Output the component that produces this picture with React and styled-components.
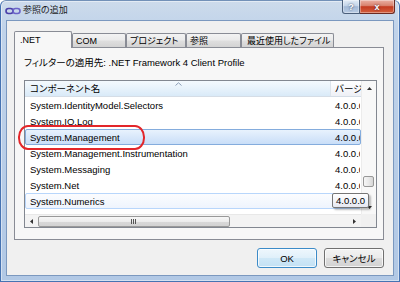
import React from "react";
import styled, { createGlobalStyle } from "styled-components";

const GlobalStyle = createGlobalStyle`
  html, body { margin: 0; padding: 0; }
  body {
    width: 400px; height: 282px; overflow: hidden;
    font-family: "Liberation Sans", "Noto Sans CJK JP", sans-serif;
    font-size: 9.5px;
    font-feature-settings: "palt" 1;
    color: #000;
    background: #fff;
  }
  * { box-sizing: border-box; }
`;

const Window = styled.div`
  width: 400px;
  height: 282px;
  display: flex;
  flex-direction: column;
  border: 1px solid #4673b2;
  border-top-color: #7391b8;
  border-radius: 6px 6px 0 0;
  background: linear-gradient(180deg, #cddbeb 0%, #c0d3ea 10%, #b1c8e5 100%);
  box-shadow: inset 0 0 0 1px rgba(255, 255, 255, 0.45);
`;

const TitleBar = styled.div`
  height: 19px;
  display: flex;
  align-items: center;
  padding-left: 4px;
  gap: 2px;
`;

const Title = styled.span`
  font-size: 9px;
  color: #1b1b1b;
  flex: 1;
  line-height: 12px;
  margin-top: -1px;
`;

const CaptionButtons = styled.div`
  align-self: flex-start;
  display: flex;
  margin-top: -1px;
  margin-right: 4px;
`;

const CaptionButton = styled.div`
  height: 14px;
  width: ${(p) => p.$w}px;
  display: flex;
  align-items: center;
  justify-content: center;
  color: #fff;
  font-weight: bold;
  font-size: 9px;
  text-shadow: 0 0 2px rgba(20, 30, 60, 0.9);
  border: 1px solid ${(p) => (p.$close ? "#6b2a22" : "#4b5f7b")};
  border-top: none;
  border-left: ${(p) => (p.$close ? "none" : "1px solid #4b5f7b")};
  border-radius: ${(p) => (p.$close ? "0 0 3px 0" : "0 0 0 3px")};
  background: ${(p) =>
    p.$close
      ? "linear-gradient(180deg, #eab0a3 0%, #d98470 42%, #c43b20 52%, #d4603f 100%)"
      : "linear-gradient(180deg, #e2ebf5 0%, #c6d6ea 42%, #a3b9d6 52%, #b9cce4 100%)"};
  box-shadow: inset 0 0 0 1px rgba(255, 255, 255, 0.35);
`;

const Client = styled.div`
  flex: 1;
  min-height: 0;
  margin: 0 5px 5px 5px;
  border: 1px solid #7b98bf;
  background: #f0f0f0;
  display: flex;
  flex-direction: column;
  padding: 10px 9px 7px 7px;
`;

const TabControl = styled.div`
  flex: 1;
  min-height: 0;
  display: flex;
  flex-direction: column;
`;

const TabStrip = styled.div`
  height: 16px;
  display: flex;
  align-items: flex-end;
  position: relative;
  z-index: 1;
`;

const Tab = styled.div`
  width: ${(p) => p.$w}px;
  height: ${(p) => (p.$active ? 17 : 14)}px;
  margin-bottom: ${(p) => (p.$active ? -1 : 0)}px;
  padding-left: ${(p) => p.$pad}px;
  display: flex;
  align-items: center;
  white-space: nowrap;
  overflow: hidden;
  font-size: 9px;
  border: 1px solid #898c95;
  border-bottom: none;
  border-radius: 2px 2px 0 0;
  background: ${(p) =>
    p.$active
      ? "#f7f7f7"
      : "linear-gradient(180deg, #f3f3f3 0%, #ebebeb 45%, #dedede 55%, #d3d3d3 100%)"};
  color: #000;
`;

const Panel = styled.div`
  flex: 1;
  min-height: 0;
  border: 1px solid #898c95;
  background: #f7f7f7;
  display: flex;
  flex-direction: column;
  padding: 9px 6px 11px 9px;
`;

const FilterLine = styled.div`
  height: 12px;
  line-height: 12px;
  margin-bottom: 11px;
  white-space: nowrap;
`;

const List = styled.div`
  flex: 1;
  min-height: 0;
  position: relative;
  border: 1px solid #828790;
  background: #fff;
  display: grid;
  grid-template-columns: 1fr 15px;
  grid-template-rows: 1fr 13px;
`;

const Content = styled.div`
  grid-area: 1 / 1;
  overflow: hidden;
  display: flex;
  flex-direction: column;
`;

const Header = styled.div`
  height: 16px;
  flex-shrink: 0;
  display: flex;
  border-bottom: 1px solid #d5dde6;
`;

const HeaderCell = styled.div`
  position: relative;
  width: ${(p) => p.$w}px;
  flex-shrink: 0;
  padding-left: ${(p) => p.$pad}px;
  line-height: 15px;
  white-space: nowrap;
  overflow: hidden;
  border-right: ${(p) => (p.$divider ? "1px solid #dde4ec" : "none")};
  background: ${(p) =>
    p.$sorted
      ? "linear-gradient(180deg, #f4f9fd 0%, #e9f3fb 45%, #d9eaf8 100%)"
      : "linear-gradient(180deg, #ffffff 0%, #f7f8fb 50%, #eef0f6 100%)"};
`;

const SortArrow = styled.svg`
  position: absolute;
  top: 1px;
  left: 150px;
`;

const Row = styled.div`
  height: 16px;
  flex-shrink: 0;
  display: flex;
  align-items: center;
  border: 1px solid
    ${(p) => (p.$selected ? "#84acdd" : p.$hover ? "#b8d6fb" : "transparent")};
  border-radius: 2px;
  background: ${(p) =>
    p.$selected
      ? "linear-gradient(180deg, #e8f2fd 0%, #c9def8 100%)"
      : p.$hover
      ? "linear-gradient(180deg, #fbfcfe 0%, #eef4fd 100%)"
      : "transparent"};
`;

const Cell = styled.div`
  width: ${(p) => p.$w}px;
  flex-shrink: 0;
  padding-left: 4px;
  white-space: nowrap;
  overflow: hidden;
  line-height: 13px;
`;

const VScroll = styled.div`
  grid-area: 1 / 2;
  display: flex;
  flex-direction: column;
  align-items: center;
  background: #f8f8f8;
  border-left: 1px solid #ececec;
`;

const ArrowBox = styled.div`
  width: ${(p) => p.$w || 14}px;
  height: ${(p) => p.$h || 14}px;
  flex-shrink: 0;
  display: flex;
  align-items: center;
  justify-content: center;
`;

const VThumb = styled.div`
  width: 11px;
  height: 11px;
  margin-top: 81px;
  margin-right: 2px;
  border: 1px solid #979797;
  border-radius: 2px;
  background: linear-gradient(90deg, #f6f6f6 0%, #e9e9e9 50%, #d6d6d6 100%);
`;

const HScroll = styled.div`
  grid-area: 2 / 1;
  display: flex;
  align-items: center;
  background: #f3f3f3;
  border-top: 1px solid #e8e8e8;
`;

const HThumb = styled.div`
  width: 192px;
  height: 11px;
  display: flex;
  align-items: center;
  justify-content: center;
  border: 1px solid #999;
  border-radius: 2px;
  background: linear-gradient(180deg, #f7f7f7 0%, #ececec 50%, #d9d9d9 51%, #d2d2d2 100%);
`;

const Spacer = styled.div`
  flex: 1;
`;

const Corner = styled.div`
  grid-area: 2 / 2;
  background: #f0f0f0;
`;

const Tooltip = styled.div`
  position: absolute;
  left: 307px;
  top: 112px;
  width: 37px;
  height: 15px;
  padding-left: 3px;
  line-height: 13px;
  border: 1px solid #767676;
  border-radius: 2px;
  background: linear-gradient(180deg, #ffffff 0%, #e6e8f1 100%);
  box-shadow: 2px 2px 2px rgba(0, 0, 0, 0.25);
  z-index: 3;
  white-space: nowrap;
`;

const Highlight = styled.div`
  position: absolute;
  left: -7px;
  top: 44px;
  width: 127px;
  height: 25px;
  border: 2px solid #e3262a;
  border-radius: 10px / 12px;
  z-index: 4;
  pointer-events: none;
`;

const ButtonRow = styled.div`
  margin-top: 8px;
  display: flex;
  justify-content: flex-end;
  gap: 7px;
`;

const Button = styled.div`
  width: 60px;
  height: 20px;
  display: flex;
  align-items: center;
  justify-content: center;
  border-radius: 3px;
  border: 1px solid ${(p) => (p.$default ? "#3c8bc8" : "#707070")};
  background: ${(p) =>
    p.$default
      ? "linear-gradient(180deg, #eef7fd 0%, #e0f0fa 48%, #cfe8f7 52%, #c3e1f4 100%)"
      : "linear-gradient(180deg, #f3f3f3 0%, #ebebeb 48%, #dddddd 52%, #d2d2d2 100%)"};
  box-shadow: inset 0 0 0 1px rgba(255, 255, 255, 0.75);
`;

const AppIcon = () => (
  <svg width="16" height="8" viewBox="0 0 16 8">
    <rect x="1" y="1.5" width="7" height="5" rx="2.5" fill="none" stroke="#4a3fa8" strokeWidth="1.6" />
    <rect x="8" y="1.5" width="7" height="5" rx="2.5" fill="none" stroke="#6a63c8" strokeWidth="1.6" />
  </svg>
);

const rows = [
  "System.IdentityModel.Selectors",
  "System.IO.Log",
  "System.Management",
  "System.Management.Instrumentation",
  "System.Messaging",
  "System.Net",
  "System.Numerics",
  "System.Printing",
];

export default function App() {
  return (
    <>
      <GlobalStyle />
      <Window>
        <TitleBar>
          <AppIcon />
          <Title>参照の追加</Title>
          <CaptionButtons>
            <CaptionButton $w={18}>?</CaptionButton>
            <CaptionButton $w={35} $close>
              x
            </CaptionButton>
          </CaptionButtons>
        </TitleBar>
        <Client>
          <TabControl>
            <TabStrip>
              <Tab $w={58} $pad={5} $active>
                .NET
              </Tab>
              <Tab $w={54} $pad={3}>
                COM
              </Tab>
              <Tab $w={60} $pad={3}>
                プロジェクト
              </Tab>
              <Tab $w={55} $pad={3}>
                参照
              </Tab>
              <Tab $w={93} $pad={5}>
                最近使用したファイル
              </Tab>
            </TabStrip>
            <Panel>
              <FilterLine>フィルターの適用先: .NET Framework 4 Client Profile</FilterLine>
              <List>
                <Content>
                  <Header>
                    <HeaderCell $w={306} $pad={5} $sorted $divider>
                      コンポーネント名
                      <SortArrow width="7" height="4" viewBox="0 0 7 4">
                        <path d="M0.5 3.5 L3.5 0.8 L6.5 3.5" fill="none" stroke="#8a9db5" strokeWidth="1" />
                      </SortArrow>
                    </HeaderCell>
                    <HeaderCell $w={30} $pad={4}>
                      バージョン
                    </HeaderCell>
                  </Header>
                  {rows.map((name) => (
                    <Row
                      key={name}
                      $selected={name === "System.Management"}
                      $hover={name === "System.Numerics"}
                    >
                      <Cell $w={305}>{name}</Cell>
                      <Cell $w={29}>4.0.0.0</Cell>
                    </Row>
                  ))}
                </Content>
                <VScroll>
                  <ArrowBox>
                    <svg width="5" height="3" viewBox="0 0 5 3">
                      <path d="M0 3 L2.5 0 L5 3 Z" fill="#333" />
                    </svg>
                  </ArrowBox>
                  <VThumb />
                  <Spacer />
                  <ArrowBox>
                    <svg width="5" height="3" viewBox="0 0 5 3">
                      <path d="M0 0 L2.5 3 L5 0 Z" fill="#333" />
                    </svg>
                  </ArrowBox>
                </VScroll>
                <HScroll>
                  <ArrowBox $w={13} $h={12}>
                    <svg width="3" height="5" viewBox="0 0 3 5">
                      <path d="M3 0 L0 2.5 L3 5 Z" fill="#333" />
                    </svg>
                  </ArrowBox>
                  <HThumb>
                    <svg width="6" height="5" viewBox="0 0 6 5">
                      <path d="M0.5 0 V5 M2.5 0 V5 M4.5 0 V5" stroke="#555" strokeWidth="1" />
                    </svg>
                  </HThumb>
                  <Spacer />
                  <ArrowBox $w={13} $h={12}>
                    <svg width="3" height="5" viewBox="0 0 3 5">
                      <path d="M0 0 L3 2.5 L0 5 Z" fill="#333" />
                    </svg>
                  </ArrowBox>
                </HScroll>
                <Corner />
                <Tooltip>4.0.0.0</Tooltip>
                <Highlight />
              </List>
            </Panel>
          </TabControl>
          <ButtonRow>
            <Button $default>OK</Button>
            <Button>キャンセル</Button>
          </ButtonRow>
        </Client>
      </Window>
    </>
  );
}
